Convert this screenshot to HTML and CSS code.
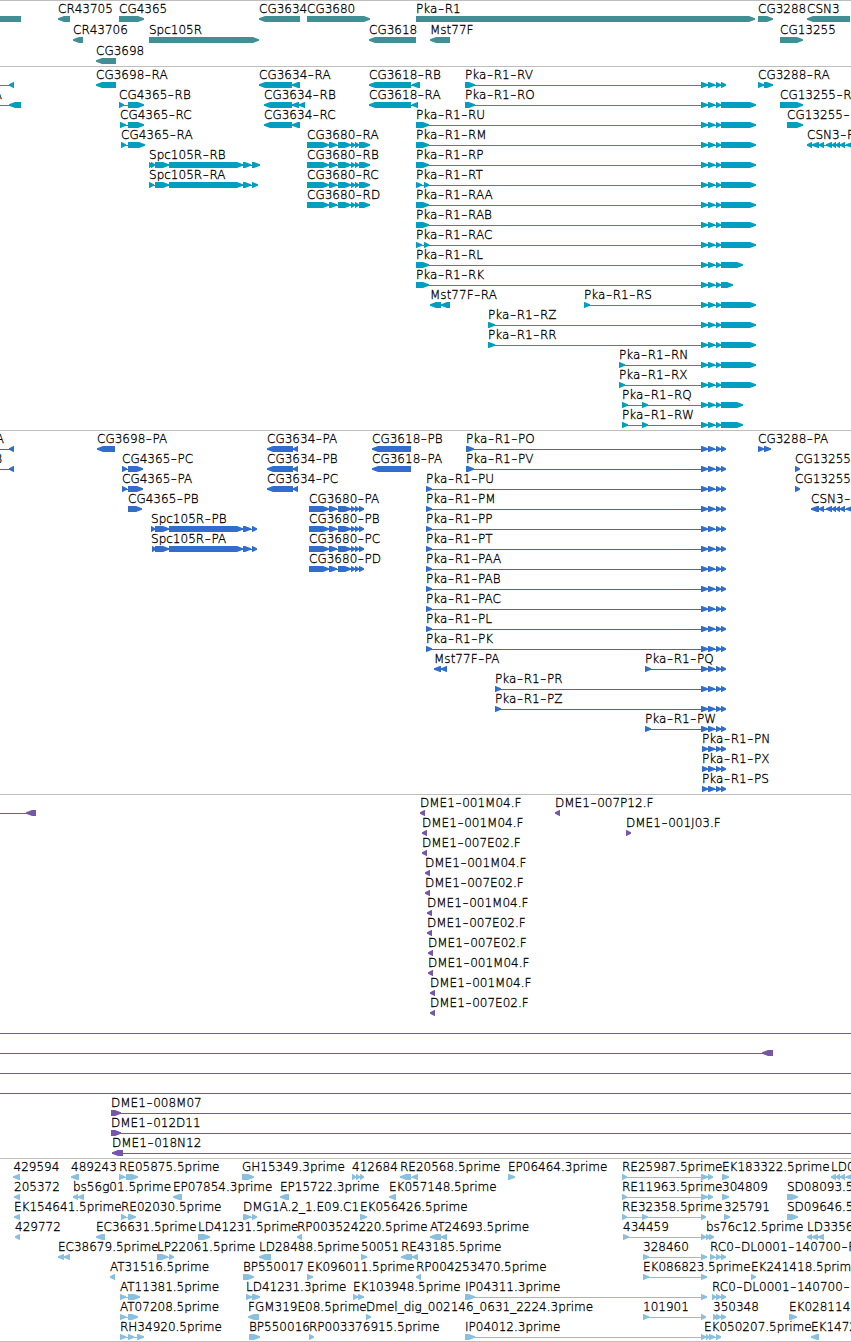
FILE: index.html
```
<!DOCTYPE html>
<html lang="en">
<head>
    <meta charset="UTF-8">
    <meta name="viewport" content="width=device-width, initial-scale=1.0">
    <title>Genome Browser</title>
    <link rel="stylesheet" href="styles.css">
</head>
<body>
    <main class="browser">
        <section class="track genes"><svg id="genes"></svg></section>
        <section class="track transcripts"><svg id="transcripts"></svg></section>
        <section class="track proteins"><svg id="proteins"></svg></section>
        <section class="track clones"><svg id="clones"></svg></section>
        <section class="track ests"><svg id="ests"></svg></section>
    </main>
    <script src="tracks.js"></script>
</body>
</html>
```
FILE: styles.css
```
body {
    margin: 0;
    background-color: #fff;
    font-family: "DejaVu Sans", sans-serif;
}
.browser {
    display: flex;
    flex-direction: column;
    width: 851px;
    height: 1341px;
    border-bottom: 1px solid #bebebe;
    overflow: hidden;
}
.track {
    box-sizing: border-box;
    height: 364px;
    border-top: 1px solid #bebebe;
}
.track svg {
    display: block;
    width: 100%;
    height: 100%;
}
.genes {
    height: 66px;
    color: #408f95;
}
.transcripts { color: #009fc0; }
.proteins { color: #316dcd; }
.clones { color: #7656a6; }
.ests {
    height: 183px;
    color: #89bfdf;
}
.exon {
    fill: currentColor;
}
.intron {
    fill: currentColor;
    shape-rendering: crispEdges;
}
.label {
    font-size: 12px;
    font-weight: 200;
    fill: #000;
    stroke: #000;
    stroke-width: 0.3px;
    white-space: pre;
}
.dash {
    font-size: 17px;
}
```
FILE: tracks.js
```
// feature: label | row | strand | exons | label x (optional, "<n" aligns the end at n)
const tail = '701-708 708-715 716-721';
const long = tail + ' 721-756';
const cds = tail + ' 721-726';
const cg3680 = '329-337 338-351 351-355 355-359';

const tracks = {
    genes: `
|0|-|-20-21
CR43705|0|-|58-70
CG4365|0|+|119-144
CR43706|1|-|73-83
Spc105R|1|+|149-259
CG3698|2|-|96-116
CG3634|0|-|259-300
CG3680|0|+|307-370
CG3618|1|-|369-416
Pka-R1|0|+|416-755
Mst77F|1|-|430-450
CG3288|0|+|758-773
CG13255|1|+|780-803
CSN3|0|-|807-850`,

    transcripts: `
|0|-|-20--10 9-14
A|1|-|-20--10 9-21|<2
CG3698-RA|0|-|96-116
CG4365-RB|1|+|119-124 128-144
CG4365-RC|2|+|120-126 128-144
CG4365-RA|3|+|121-126 128-145
Spc105R-RB|4|+|149-152 151-155 155-169 169-243 243-251 252-260
Spc105R-RA|5|+|149-154 155-169 169-243 243-251 252-258
CG3634-RA|0|-|259-292 292-300
CG3634-RB|1|-|264-292 292-299 299-305
CG3634-RC|2|-|264-292 292-300
CG3680-RA|3|+|307-329 ${cg3680} 359-370
CG3680-RB|4|+|307-329 ${cg3680} 359-370
CG3680-RC|5|+|307-329 ${cg3680} 359-370
CG3680-RD|6|+|307-329 ${cg3680} 359-370
CG3618-RB|0|-|369-411 412-420
CG3618-RA|1|-|369-411 412-418
Pka-R1-RV|0|+|465-475 ${cds}
Pka-R1-RO|1|+|465-475 ${long}
Pka-R1-RU|2|+|416-429 ${long}
Pka-R1-RM|3|+|416-429 ${long}
Pka-R1-RP|4|+|416-429 ${long}
Pka-R1-RT|5|+|416-422 424-429 ${long}
Pka-R1-RAA|6|+|416-429 ${long}
Pka-R1-RAB|7|+|416-429 ${long}
Pka-R1-RAC|8|+|416-422 424-429 ${long}
Pka-R1-RL|9|+|416-429 ${tail} 721-743
Pka-R1-RK|10|+|416-429 ${tail} 721-733
Mst77F-RA|11|-|430-441 441-450
Pka-R1-RS|11|+|584-590 ${long}
Pka-R1-RZ|12|+|488-495 ${long}
Pka-R1-RR|13|+|488-495 ${long}
Pka-R1-RN|14|+|619-625 ${long}
Pka-R1-RX|15|+|619-625 ${long}
Pka-R1-RQ|16|+|622-628 642-648 ${tail} 721-743
Pka-R1-RW|17|+|622-628 642-648 ${tail} 721-743
CG3288-RA|0|+|758-764 764-773
CG13255-RA|1|+|780-803
CG13255-RB|2|+|787-803
CSN3-RA|3|-|807-812 812-819 819-824 826-832 832-836 836-840 840-845 846-855`,

    proteins: `
A|0|-|-20--10 9-14|<4
B|1|-|-20--10 9-14|<2
CG3698-PA|0|-|97-115
CG4365-PC|1|+|122-127 128-143
CG4365-PA|2|+|122-127 128-143
CG4365-PB|3|+|128-142
Spc105R-PB|4|+|151-155 155-169 169-243 243-251 252-257
Spc105R-PA|5|+|152-156 155-169 169-243 243-251 252-257|151
CG3634-PA|0|-|267-293 293-298
CG3634-PB|1|-|267-293 293-298
CG3634-PC|2|-|267-293 293-298
CG3680-PA|3|+|309-329 ${cg3680} 359-364
CG3680-PB|4|+|309-329 ${cg3680} 359-364
CG3680-PC|5|+|309-329 ${cg3680} 359-364
CG3680-PD|6|+|309-329 ${cg3680} 359-364
CG3618-PB|0|-|372-411
CG3618-PA|1|-|372-411
Pka-R1-PO|0|+|466-474 ${cds}
Pka-R1-PV|1|+|466-474 ${cds}
Pka-R1-PU|2|+|426-432 ${cds}
Pka-R1-PM|3|+|426-432 ${cds}
Pka-R1-PP|4|+|426-432 ${cds}
Pka-R1-PT|5|+|426-432 ${cds}
Pka-R1-PAA|6|+|426-432 ${cds}
Pka-R1-PAB|7|+|426-432 ${cds}
Pka-R1-PAC|8|+|426-432 ${cds}
Pka-R1-PL|9|+|426-432 ${cds}
Pka-R1-PK|10|+|426-432 ${cds}
Mst77F-PA|11|-|434-441 441-447
Pka-R1-PQ|11|+|645-651 ${cds}
Pka-R1-PR|12|+|495-501 ${cds}
Pka-R1-PZ|13|+|495-501 ${cds}
Pka-R1-PW|14|+|645-651 ${cds}
Pka-R1-PN|15|+|702-708 708-715 716-721 721-726
Pka-R1-PX|16|+|702-708 708-715 716-721 721-726
Pka-R1-PS|17|+|702-708 708-715 716-721 721-726
CG3288-PA|0|+|758-764 764-771
CG13255-PA|1|+|795-800
CG13255-PB|2|+|795-800
CSN3-PA|3|-|811-819 819-824 826-832 832-836 836-840 840-845 846-855`,

    clones: `
|0|-|-20--10 26-36
DME1-001M04.F|0|-|420-425
DME1-007P12.F|0|-|555-560
DME1-001M04.F|1|-|422-427
DME1-001J03.F|1|+|626-631
DME1-007E02.F|2|-|422-427
DME1-001M04.F|3|-|425-430
DME1-007E02.F|4|-|425-430
DME1-001M04.F|5|-|427-432
DME1-007E02.F|6|-|427-432
DME1-007E02.F|7|-|428-433
DME1-001M04.F|8|-|428-433
DME1-001M04.F|9|-|430-435
DME1-007E02.F|10|-|430-435
|11|-|-20--10 860-870
|12|-|-20--10 762-773
|13|-|-20--10 860-870
|14|-|-20--10 860-870
DME1-008M07|15|+|111-121 860-870
DME1-012D11|16|+|111-121 860-870
DME1-018N12|17|-|112-123 860-870`,

    ests: `
429594|0|-|13-20|13.5
489243|0|-|71-79
RE05875.5prime|0|+|119-125 126-138
GH15349.3prime|0|+|242-254
412684|0|+|352-356 356-360 360-364
RE20568.5prime|0|-|400-411 412-418
EP06464.3prime|0|+|508-515
RE25987.5prime|0|+|622-627 701-708 708-713
EK183322.5prime|0|+|722-729
LD04994.5prime|0|-|831-836 836-840 840-845 846-855
205372|1|-|14-20
bs56g01.5prime|1|-|73-78 78-84
EP07854.3prime|1|-|173-182
EP15722.3prime|1|-|280-289
EK057148.5prime|1|-|389-396
RE11963.5prime|1|+|622-627 701-708 708-713
304809|1|+|722-729
SD08093.5prime|1|+|787-798
EK154641.5prime|2|-|14-20
RE02030.5prime|2|+|121-126 128-136
DMG1A.2_1.E09.C1|2|+|243-251 252-257
EK056426.5prime|2|+|360-367
RE32358.5prime|2|+|622-627 642-648 701-706
325791|2|+|724-730
SD09646.5prime|2|+|787-798
429772|3|-|15-20
EC36631.5prime|3|-|96-105
LD41231.5prime|3|+|198-210
RP003524220.5prime|3|-|297-302
AT24693.5prime|3|-|430-441 441-447
434459|3|+|623-629 701-706
bs76c12.5prime|3|+|706-710 709-714
LD33565.5prime|3|-|807-812 812-818 818-824
EC38679.5prime|4|-|58-64 64-70
LP22061.5prime|4|+|157-168 169-174
LD28488.5prime|4|-|259-271
50051|4|+|361-367
RE43185.5prime|4|-|401-412 412-418
328460|4|+|643-649 701-707
RC0-DL0001-140700-F|4|+|710-715 716-721 721-726
AT31516.5prime|5|-|110-115
BP550017|5|+|243-254
EK096011.5prime|5|+|307-313
RP004253470.5prime|5|-|416-421
EK086823.5prime|5|+|643-649 701-707
EK241418.5prime|5|+|751-756
AT11381.5prime|6|+|120-126 128-140
LD41231.3prime|6|+|246-252 252-260
EK103948.5prime|6|+|353-358 358-364
IP04311.3prime|6|+|465-475 701-707
RC0-DL0001-140700-F|6|+|712-716 716-721 721-726
AT07208.5prime|7|+|120-126 128-138
FGM319E08.5prime|7|-|248-259
Dmel_dig_002146_0631_2224.3prime|7|+|366-371
101901|7|+|643-649 701-706
350348|7|+|713-717 716-721 721-726
EK028114.5prime|7|+|789-797
RH34920.5prime|8|+|120-126 128-134 137-144
BP550016|8|+|249-260
RP003376915.5prime|8|+|309-314
IP04012.3prime|8|+|465-475 701-706
EK050207.5prime|8|+|706-709 709-715 716-721|704
EK147258.5prime|8|-|811-819`
};

const exonShape = (start, end, strand, y) => {
    const head = Math.min(6, end - start - 0.5);
    const [back, tip, dir] = strand === '+' ? [start, end, 1] : [end, start, -1];
    const neck = tip - head * dir;
    return `M${back} ${y}H${neck}L${tip} ${y + 2.3}V${y + 3.7}L${neck} ${y + 6}H${back}Z`;
};

const drawLabel = (name, at, y) => {
    const alignEnd = at[0] === '<';
    const chars = [...name];
    // dashes are wide and sit low, so shift each one down and the next letter back up
    const dx = chars.map((c, i) => (c === '-' || chars[i - 1] === '-' ? 0.6 : 0));
    const dy = chars.map((c, i) => (c === '-' ? 1.3 : chars[i - 1] === '-' ? -1.3 : 0));
    const shift = name.includes('-') ? ` dx="${dx.join(' ')}" dy="${dy.join(' ')}"` : '';
    const text = name.replace(/-/g, '<tspan class="dash">-</tspan>');
    return `<text class="label" x="${at.replace('<', '')}" y="${y}"${alignEnd ? ' text-anchor="end"' : ''}${shift}>${text}</text>`;
};

Object.keys(tracks).forEach((id) => {
    const pitch = id === 'genes' ? 21 : 20;
    let shapes = '';
    let labels = '';

    tracks[id].trim().split('\n').forEach((feature) => {
        const [name, row, strand, parts, at] = feature.split('|');
        const top = row * pitch;
        const exons = parts.split(' ').map((part) => part.match(/^(-?\d+)-(-?\d+)$/).slice(1).map(Number));
        const start = exons[0][0];
        const end = exons[exons.length - 1][1];

        if (exons.length > 1) {
            shapes += `<rect class="intron" x="${start}" y="${top + 18}" width="${end - start - 1}" height="1"/>`;
        }
        shapes += `<path class="exon" d="${exons.map(([a, b]) => exonShape(a, b, strand, top + 15)).join('')}"/>`;
        if (name) {
            labels += drawLabel(name, at || String(start), top + 12);
        }
    });

    document.getElementById(id).innerHTML = shapes + labels;
});
```
